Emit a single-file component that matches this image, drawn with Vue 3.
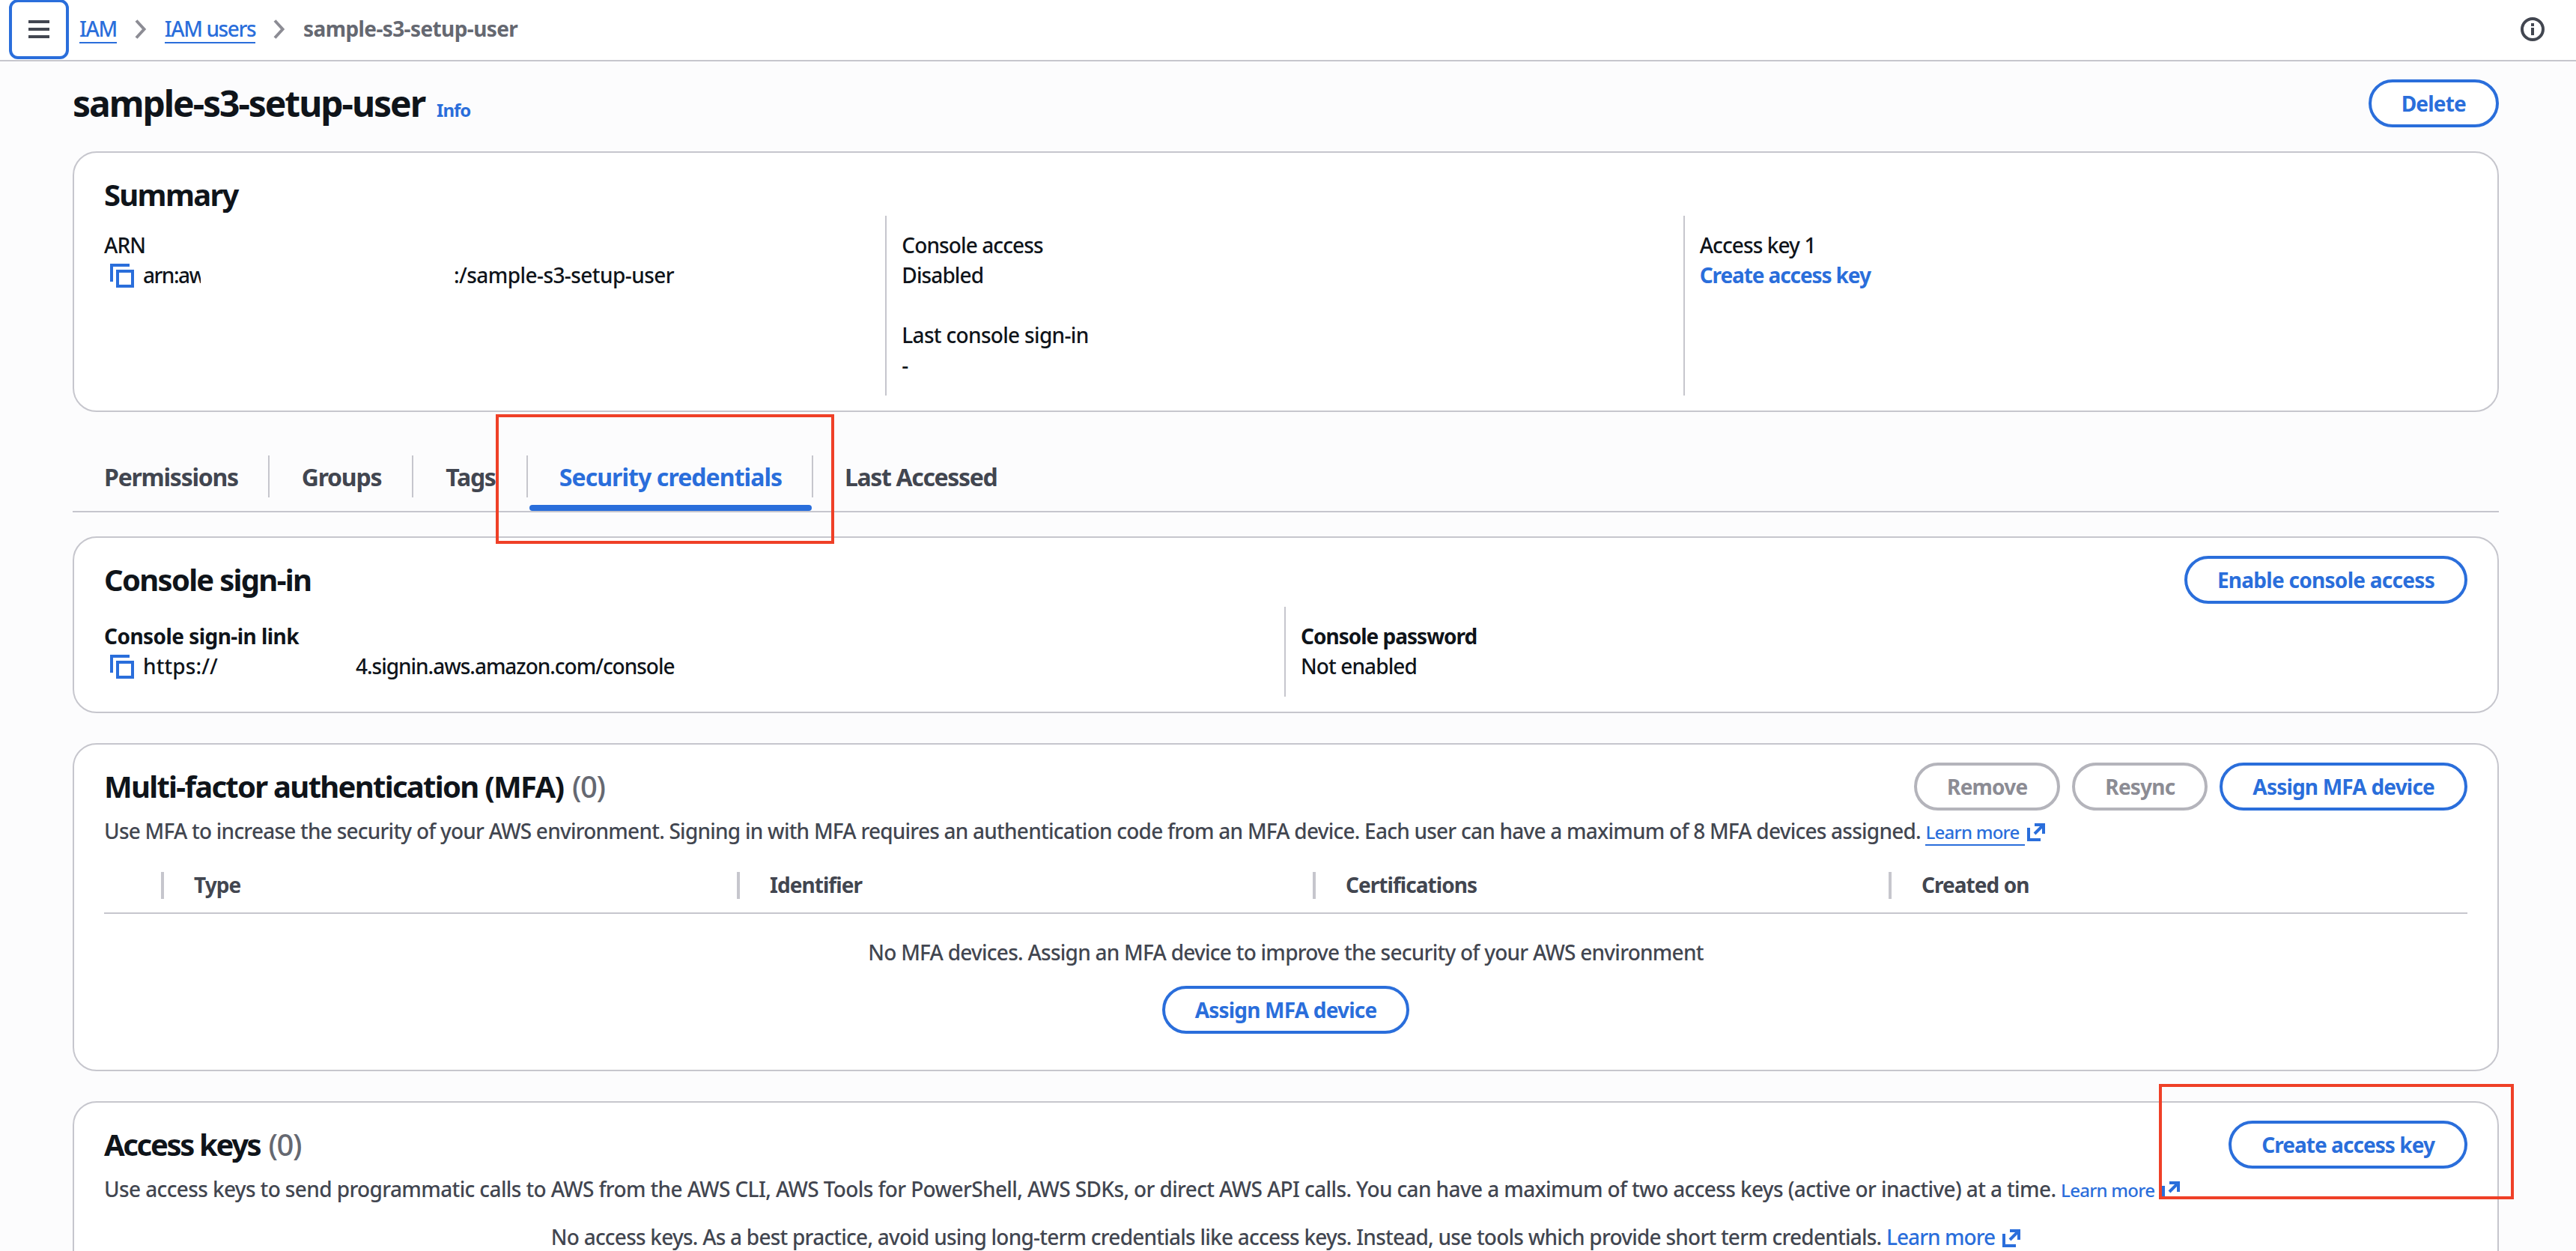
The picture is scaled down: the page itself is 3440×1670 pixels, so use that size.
<template>
    <div class="page">
        <header class="topbar">
            <button class="menu-button">
                <svg width="28" height="24" viewBox="0 0 28 24">
                    <path d="M0 2h28M0 12h28M0 22h28" stroke="#424650" stroke-width="4" />
                </svg>
            </button>
            <nav class="breadcrumbs">
                <a class="crumb">IAM</a>
                <svg class="chevron" width="16" height="26" viewBox="0 0 16 26">
                    <path d="M2 1.5L12.5 13L2 24.5" />
                </svg>
                <a class="crumb">IAM users</a>
                <svg class="chevron" width="16" height="26" viewBox="0 0 16 26">
                    <path d="M2 1.5L12.5 13L2 24.5" />
                </svg>
                <span class="crumb-current">sample-s3-setup-user</span>
            </nav>
            <svg class="info-icon" width="32" height="32" viewBox="0 0 32 32">
                <circle cx="16" cy="16" r="14" fill="none" stroke="#424650" stroke-width="4" />
                <path d="M14 8h4v4h-4zM14 14h4v10h-4z" fill="#424650" />
            </svg>
        </header>

        <main class="content">
            <div class="title-row">
                <h1>sample-s3-setup-user</h1>
                <a class="info-link">Info</a>
                <button class="btn">Delete</button>
            </div>

            <section class="card summary">
                <div class="card-header"><h2>Summary</h2></div>
                <div class="columns three">
                    <div class="column">
                        <div>ARN</div>
                        <div class="copy-row">
                            <svg class="copy-icon" width="32" height="32" viewBox="0 0 32 32">
                                <path d="M2 24V2H26M10 10H30V30H10Z" />
                            </svg>
                            <span class="arn-start">arn:aw</span>
                            <span class="arn-end">:/sample-s3-setup-user</span>
                        </div>
                    </div>
                    <div class="column">
                        <div>Console access</div>
                        <div>Disabled</div>
                        <div class="second-pair">Last console sign-in</div>
                        <div>-</div>
                    </div>
                    <div class="column">
                        <div>Access key 1</div>
                        <a class="bold-link">Create access key</a>
                    </div>
                </div>
            </section>

            <div class="tabs">
                <div
                    v-for="tab in tabs"
                    :key="tab"
                    class="tab"
                    :class="{ active: tab === activeTab }"
                    @click="activeTab = tab"
                >
                    <span>{{ tab }}</span>
                </div>
                <div class="highlight tab-highlight"></div>
            </div>

            <section class="card signin">
                <div class="card-header">
                    <h2>Console sign-in</h2>
                    <button class="btn enable">Enable console access</button>
                </div>
                <div class="columns two">
                    <div class="column">
                        <div class="label link-label">Console sign-in link</div>
                        <div class="copy-row">
                            <svg class="copy-icon" width="32" height="32" viewBox="0 0 32 32">
                                <path d="M2 24V2H26M10 10H30V30H10Z" />
                            </svg>
                            <span class="url-start">https://</span>
                            <span class="url-end">4.signin.aws.amazon.com/console</span>
                        </div>
                    </div>
                    <div class="column">
                        <div class="label">Console password</div>
                        <div>Not enabled</div>
                    </div>
                </div>
            </section>

            <section class="card mfa">
                <div class="card-header">
                    <h2>Multi-factor authentication (MFA) <span class="count">(0)</span></h2>
                    <div class="actions">
                        <button class="btn disabled">Remove</button>
                        <button class="btn disabled">Resync</button>
                        <button class="btn">Assign MFA device</button>
                    </div>
                </div>
                <p class="description">
                    Use MFA to increase the security of your AWS environment. Signing in with MFA requires an authentication code from an MFA device. Each user can have a maximum of 8 MFA devices assigned.
                    <a class="learn-more underlined">Learn more</a>
                    <svg class="external" width="24" height="24" viewBox="0 0 24 24">
                        <path d="M2 6V22H18M10 2H22V14M22 2L10 14" />
                    </svg>
                </p>
                <div class="table-head">
                    <div></div>
                    <div v-for="column in columns" :key="column" class="th">{{ column }}</div>
                </div>
                <p class="empty">No MFA devices. Assign an MFA device to improve the security of your AWS environment</p>
                <div class="empty-action">
                    <button class="btn">Assign MFA device</button>
                </div>
            </section>

            <section class="card keys">
                <div class="card-header">
                    <h2 class="keys-title">Access keys <span class="count">(0)</span></h2>
                    <button class="btn create">Create access key</button>
                </div>
                <p class="description keys-description">
                    Use access keys to send programmatic calls to AWS from the AWS CLI, AWS Tools for PowerShell, AWS SDKs, or direct AWS API calls. You can have a maximum of two access keys (active or inactive) at a time.
                    <a class="learn-more">Learn more</a>
                    <svg class="external" width="24" height="24" viewBox="0 0 24 24">
                        <path d="M2 6V22H18M10 2H22V14M22 2L10 14" />
                    </svg>
                </p>
                <p class="empty keys-empty">
                    No access keys. As a best practice, avoid using long-term credentials like access keys. Instead, use tools which provide short term credentials.
                    <a class="link">Learn more</a>
                    <svg class="external" width="24" height="24" viewBox="0 0 24 24">
                        <path d="M2 6V22H18M10 2H22V14M22 2L10 14" />
                    </svg>
                </p>
                <div class="highlight key-highlight"></div>
            </section>
        </main>
    </div>
</template>

<script setup>
import { ref } from 'vue';

const tabs = ['Permissions', 'Groups', 'Tags', 'Security credentials', 'Last Accessed'];
const columns = ['Type', 'Identifier', 'Certifications', 'Created on'];
const activeTab = ref('Security credentials');
</script>

<style>
body {
    margin: 0;
    background: #fcfcfd;
}
</style>

<style scoped>
.page {
    height: 1670px;
    overflow: hidden;
    background: #fcfcfd;
    color: #0f141a;
    font-family: "Noto Sans", "Open Sans", sans-serif;
    font-size: 28px;
    font-weight: 500;
    line-height: 40px;
    letter-spacing: -0.77px;
}

h1, h2, p {
    margin: 0;
}

.topbar {
    box-sizing: border-box;
    height: 82px;
    display: flex;
    align-items: flex-start;
    background: #fff;
    border-bottom: 2px solid #c6c6cd;
}

.menu-button {
    box-sizing: border-box;
    width: 80px;
    height: 80px;
    margin: -1px 0 0 12px;
    padding: 0;
    display: flex;
    align-items: center;
    justify-content: center;
    background: #fff;
    border: 4px solid #2a6edb;
    border-radius: 12px;
}

.breadcrumbs {
    display: flex;
    align-items: flex-start;
    margin-left: 14px;
    padding-top: 18px;
}

.crumb {
    height: 38px;
    color: #2a6edb;
    border-bottom: 2px solid #2a6edb;
    letter-spacing: -1.4px;
}

.chevron {
    margin: 8px 24px 0;
}

.chevron path {
    fill: none;
    stroke: #8c8c94;
    stroke-width: 4;
}

.crumb-current {
    color: #656871;
    font-weight: 700;
    letter-spacing: -0.6px;
}

.info-icon {
    margin: 23px 42px 0 auto;
}

.content {
    padding: 24px 103px 0 97px;
}

.title-row {
    height: 64px;
    display: flex;
    align-items: center;
    margin-bottom: 32px;
}

h1 {
    font-size: 48px;
    line-height: 60px;
    letter-spacing: -2.05px;
}

.info-link {
    margin: 17px auto 0 16px;
    color: #2a6edb;
    font-size: 24px;
    font-weight: 700;
    letter-spacing: -1px;
}

.btn {
    box-sizing: border-box;
    height: 64px;
    padding: 0 40px;
    background: #fff;
    border: 4px solid #2a6edb;
    border-radius: 32px;
    color: #2a6edb;
    font: 700 28px/40px "Noto Sans", "Open Sans", sans-serif;
    letter-spacing: -0.8px;
    white-space: nowrap;
}

.btn.enable {
    letter-spacing: -0.72px;
}

.btn.create {
    letter-spacing: -0.94px;
}

.btn.disabled {
    color: #8c8c94;
    border-color: #b4b4bb;
}

.card {
    position: relative;
    box-sizing: border-box;
    padding: 24px 40px 0;
    background: #fff;
    border: 2px solid #c6c6cd;
    border-radius: 32px;
}

.summary {
    height: 348px;
}

.signin {
    height: 236px;
    margin-top: 32px;
}

.mfa {
    height: 438px;
    margin-top: 40px;
}

.keys {
    height: 300px;
    margin-top: 40px;
}

.card-header {
    height: 64px;
    display: flex;
    align-items: flex-start;
    justify-content: space-between;
}

h2 {
    padding-top: 8px;
    font-size: 40px;
    line-height: 48px;
    letter-spacing: -1.72px;
}

.keys-title {
    letter-spacing: -2.35px;
}

.count {
    margin-left: 3px;
    color: #656871;
    font-weight: 500;
    letter-spacing: -1.4px;
}

.actions {
    display: flex;
    gap: 16px;
}

.columns {
    display: grid;
    column-gap: 40px;
}

.columns.three {
    grid-template-columns: repeat(3, 1fr);
    height: 240px;
    margin-top: -4px;
}

.columns.two {
    grid-template-columns: repeat(2, 1fr);
    height: 120px;
    margin-top: 4px;
}

.column {
    padding-top: 19px;
    letter-spacing: -0.9px;
}

.column + .column {
    margin-left: -22px;
    padding-left: 20px;
    border-left: 2px solid #c6c6cd;
}

.second-pair {
    margin-top: 40px;
    letter-spacing: -0.68px;
}

.copy-row {
    display: flex;
    white-space: nowrap;
}

.copy-icon {
    margin: 5px 12px 0 8px;
}

.copy-icon path {
    fill: none;
    stroke: #2a6edb;
    stroke-width: 4;
}

.arn-start {
    width: 77px;
    overflow: hidden;
    letter-spacing: -1.5px;
}

.arn-end {
    margin-left: 338px;
    letter-spacing: -0.57px;
}

.url-start {
    width: 102px;
    letter-spacing: 0.1px;
}

.url-end {
    margin-left: 182px;
    letter-spacing: -1.03px;
}

.label {
    font-weight: 700;
    letter-spacing: -1px;
}

.link-label {
    letter-spacing: -0.55px;
}

.bold-link {
    color: #2a6edb;
    font-weight: 700;
    letter-spacing: -1.1px;
}

.tabs {
    position: relative;
    box-sizing: border-box;
    height: 134px;
    padding-top: 58px;
    display: flex;
    border-bottom: 2px solid #c6c6cd;
}

.tab {
    position: relative;
    box-sizing: border-box;
    height: 56px;
    padding-left: 2px;
    border-right: 2px solid #c6c6cd;
    color: #424650;
    font-size: 32px;
    font-weight: 700;
    line-height: 58px;
    letter-spacing: -1.25px;
    text-align: center;
}

.tab:nth-child(1) {
    width: 263px;
}

.tab:nth-child(2) {
    width: 192px;
}

.tab:nth-child(3) {
    width: 153px;
}

.tab:nth-child(4) {
    width: 381px;
    letter-spacing: -0.93px;
}

.tab:nth-child(5) {
    padding-left: 42px;
    border-right: none;
    letter-spacing: -1.36px;
}

.tab.active {
    color: #2a6edb;
}

.tab.active::after {
    content: "";
    position: absolute;
    left: 2px;
    right: 0;
    bottom: -18px;
    height: 8px;
    border-radius: 4px;
    background: #2a6edb;
}

.highlight {
    position: absolute;
    box-sizing: border-box;
    border: 4px solid #ef4027;
}

.tab-highlight {
    left: 565px;
    top: 3px;
    width: 452px;
    height: 173px;
    z-index: 1;
}

.key-highlight {
    left: 2784px;
    top: -25px;
    width: 474px;
    height: 154px;
}

.description {
    height: 40px;
    margin-top: 7px;
    color: #424650;
    white-space: nowrap;
}

.keys-description {
    letter-spacing: -0.62px;
}

.learn-more {
    color: #2a6edb;
    font-size: 24px;
    line-height: 24px;
    letter-spacing: -0.75px;
}

.learn-more.underlined {
    padding: 0 7px 0 0;
    border-bottom: 2px solid #2a6edb;
}

.link {
    color: #2a6edb;
    letter-spacing: -0.95px;
}

.external {
    margin-left: 10px;
    vertical-align: -3px;
}

.underlined + .external {
    margin-left: 3px;
}

.external path {
    fill: none;
    stroke: #2a6edb;
    stroke-width: 4;
}

.table-head {
    display: grid;
    grid-template-columns: 76px repeat(4, 769px);
    padding: 32px 0 17px;
    border-bottom: 2px solid #c6c6cd;
}

.th {
    height: 36px;
    margin: 3px 0 1px;
    padding-left: 40px;
    border-left: 4px solid #c6c6cd;
    color: #424650;
    font-weight: 700;
    line-height: 34px;
    letter-spacing: -0.95px;
}

.empty {
    margin-top: 31px;
    color: #424650;
    text-align: center;
    white-space: nowrap;
    letter-spacing: -0.75px;
}

.keys-empty {
    margin-top: 24px;
    letter-spacing: -0.77px;
}

.empty-action {
    margin-top: 25px;
    display: flex;
    justify-content: center;
}
</style>
